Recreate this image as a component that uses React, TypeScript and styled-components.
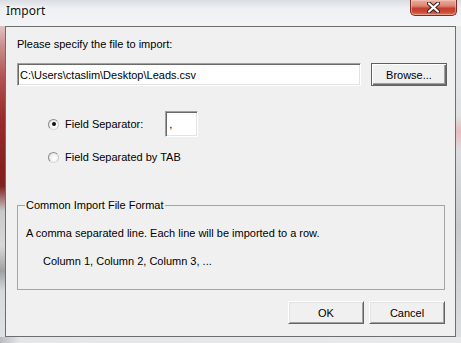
import React from 'react'
import styled, { createGlobalStyle } from 'styled-components'

const GlobalStyle = createGlobalStyle`
  html, body {
    margin: 0;
    padding: 0;
    background: #e9ecef;
  }
  body {
    font-family: 'Liberation Sans', Arial, sans-serif;
    font-size: 11px;
    color: #000;
  }
`

const Window = styled.div`
  width: 461px;
  height: 343px;
  display: flex;
  flex-direction: column;
  overflow: hidden;
  background: linear-gradient(180deg, #d9dde2 0px, #eef0f3 8px, #f3f4f6 26px, #e6e8ea 100%);
`

const TitleBar = styled.div`
  height: 26px;
  display: flex;
  justify-content: space-between;
  align-items: flex-start;
`

const Title = styled.span`
  font-family: 'Noto Sans', 'Open Sans', sans-serif;
  font-size: 12px;
  line-height: 16px;
  margin: 3px 0 0 6px;
  color: #111;
  text-shadow: 0 0 6px #fff, 0 0 3px #fff;
`

const CloseButton = styled.div`
  width: 47px;
  height: 16px;
  margin-right: 4px;
  display: flex;
  align-items: center;
  justify-content: center;
  box-sizing: border-box;
  border: 1px solid #7a2c22;
  border-top: none;
  border-radius: 0 0 5px 5px;
  background: linear-gradient(180deg, #eab0a0 0%, #dc8470 40%, #c4402e 55%, #c84a36 80%, #de7c60 100%);
  box-shadow: inset 0 0 0 1px rgba(255, 210, 200, 0.45);
`

const Middle = styled.div`
  display: flex;
  height: 311px;
`

const LeftFrame = styled.div`
  width: 5px;
  background: linear-gradient(
    180deg,
    #e2c2c2 0px,
    #c98e8e 20px,
    #b25454 50px,
    #9a2c2c 90px,
    #86201f 140px,
    #7f2222 160px,
    #c9c9c9 185px,
    #d8d8d8 220px,
    #9fa0a2 245px,
    #d7d9db 265px,
    #dfe1e3 100%
  );
`

const RightFrame = styled.div`
  width: 5px;
  background: linear-gradient(
    180deg,
    #e8eaec 0px,
    #dfe1e3 90px,
    #e6bdbd 105px,
    #dcdde0 125px,
    #c8cacc 200px,
    #dcdee0 100%
  );
`

const BottomFrame = styled.div`
  height: 6px;
  background: linear-gradient(90deg, #b9bbbe 0px, #e4e6e8 20px, #e7e9eb 100%);
`

const Client = styled.div`
  flex: 1;
  box-sizing: border-box;
  border: 1px solid #6e6e6e;
  background: #f0f0f0;
  padding: 11px 10px 0 11px;
  display: flex;
  flex-direction: column;
`

const Text = styled.div<{ $indent?: number; $top?: number }>`
  line-height: 13px;
  white-space: nowrap;
  margin-left: ${(p) => p.$indent ?? 0}px;
  margin-top: ${(p) => p.$top ?? 0}px;
`

const FileRow = styled.div`
  display: flex;
  gap: 10px;
  margin-top: 12px;
  margin-right: -2px;
  height: 23px;
`

const sunken = `
  box-sizing: border-box;
  background: #fff;
  border-top: 1px solid #a0a0a0;
  border-left: 1px solid #a0a0a0;
  border-bottom: 1px solid #fff;
  border-right: 1px solid #fff;
  box-shadow: inset 1px 1px 0 #696969, inset -1px -1px 0 #e3e3e3;
`

const PathInput = styled.input`
  ${sunken}
  flex: 1;
  min-width: 0;
  height: 23px;
  margin: 0;
  padding: 0 2px;
  font-family: 'Liberation Sans', Arial, sans-serif;
  font-size: 11px;
  line-height: 13px;
  color: #000;
  outline: none;
`

const Button = styled.button<{ $default?: boolean }>`
  width: 76px;
  height: 23px;
  margin: 0;
  padding: 0;
  box-sizing: border-box;
  background: #f0f0f0;
  font-family: 'Liberation Sans', Arial, sans-serif;
  font-size: 11px;
  color: #000;
  border: 1px solid ${(p) => (p.$default ? '#5f5f5f' : 'transparent')};
  border-top-color: ${(p) => (p.$default ? '#5f5f5f' : '#ffffff')};
  border-left-color: ${(p) => (p.$default ? '#5f5f5f' : '#ffffff')};
  border-bottom-color: #646464;
  border-right-color: #646464;
  box-shadow: ${(p) =>
    p.$default
      ? 'inset 1px 1px 0 #ffffff, inset -1px -1px 0 #6a6a6a, inset -2px -2px 0 #a0a0a0'
      : 'inset 1px 1px 0 #e3e3e3, inset -1px -1px 0 #a0a0a0'};
`

const OptionRow = styled.div<{ $top: number; $height: number }>`
  display: flex;
  align-items: center;
  margin-top: ${(p) => p.$top}px;
  margin-left: 31px;
  height: ${(p) => p.$height}px;
`

const Radio = styled.span<{ $checked?: boolean }>`
  width: 11px;
  height: 11px;
  box-sizing: border-box;
  border-radius: 50%;
  border: 1px solid #8c8c8c;
  border-right-color: #c8c8c8;
  border-bottom-color: #d8d8d8;
  background: radial-gradient(circle at 60% 60%, #ffffff 0%, #f4f4f4 45%, #d4d4d4 100%);
  display: flex;
  align-items: center;
  justify-content: center;
  margin-right: 6px;
  flex-shrink: 0;

  &::after {
    content: '';
    width: 4px;
    height: 4px;
    border-radius: 50%;
    background: ${(p) => (p.$checked ? '#111' : 'transparent')};
  }
`

const OptionLabel = styled.span`
  line-height: 13px;
  white-space: nowrap;
`

const SeparatorBox = styled.div`
  ${sunken}
  width: 33px;
  height: 26px;
  margin-left: 22px;
  padding: 0 0 0 3px;
  line-height: 24px;
  font-size: 11px;
`

const GroupBox = styled.fieldset`
  margin: 34px 0 0 0;
  padding: 0 8px 21px 8px;
  border: 1px solid #a5a5a5;
  min-width: 0;
`

const GroupLegend = styled.legend`
  padding: 0 1px;
  margin-left: -1px;
  line-height: 13px;
  font-size: 11px;
`

const ButtonRow = styled.div`
  display: flex;
  justify-content: flex-end;
  gap: 5px;
  margin-top: 11px;
`

export default function App() {
  return (
    <>
      <GlobalStyle />
      <Window>
        <TitleBar>
          <Title>Import</Title>
          <CloseButton>
            <svg width="13" height="11" viewBox="0 0 13 11">
              <path d="M2 1.5 L11 9.5 M11 1.5 L2 9.5" stroke="#3b2220" strokeWidth="4.2" strokeLinecap="round" />
              <path d="M2 1.5 L11 9.5 M11 1.5 L2 9.5" stroke="#ffffff" strokeWidth="2.2" strokeLinecap="round" />
            </svg>
          </CloseButton>
        </TitleBar>
        <Middle>
          <LeftFrame />
          <Client>
            <Text>Please specify the file to import:</Text>
            <FileRow>
              <PathInput readOnly defaultValue="C:\Users\ctaslim\Desktop\Leads.csv" />
              <Button $default>Browse...</Button>
            </FileRow>

            <OptionRow $top={25} $height={26}>
              <Radio $checked />
              <OptionLabel>Field Separator:</OptionLabel>
              <SeparatorBox>,</SeparatorBox>
            </OptionRow>
            <OptionRow $top={12} $height={16}>
              <Radio />
              <OptionLabel>Field Separated by TAB</OptionLabel>
            </OptionRow>

            <GroupBox>
              <GroupLegend>Common Import File Format</GroupLegend>
              <Text $top={15}>A comma separated line. Each line will be imported to a row.</Text>
              <Text $top={15} $indent={17}>Column 1, Column 2, Column 3, ...</Text>
            </GroupBox>

            <ButtonRow>
              <Button>OK</Button>
              <Button>Cancel</Button>
            </ButtonRow>
          </Client>
          <RightFrame />
        </Middle>
        <BottomFrame />
      </Window>
    </>
  )
}
